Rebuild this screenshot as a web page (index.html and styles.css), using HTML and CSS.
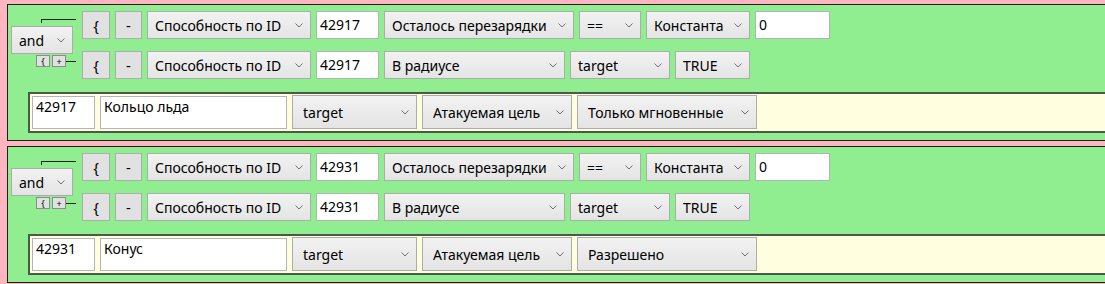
FILE: index.html
```html
<!doctype html>
<html>
<head>
<meta charset="utf-8">
<title>Правила</title>
<link rel="stylesheet" href="styles.css">
</head>
<body>
	<div class="rule">
		<div class="cond">
			<div class="logic">
				<div class="braceTop"></div>
				<select class="sel selAnd"><option>and</option></select>
				<div class="tools">
					<button class="mini">{</button><button class="mini">+</button><span class="braceBot"></span>
				</div>
			</div>
			<div class="rows">
				<div class="row">
					<button class="btn">{</button>
					<button class="btn">-</button>
					<select class="sel w164"><option>Способность по ID</option></select>
					<input type="text" class="box w63" value="42917">
					<select class="sel w190"><option>Осталось перезарядки</option></select>
					<select class="sel w62"><option>==</option></select>
					<select class="sel w104"><option>Константа</option></select>
					<input type="text" class="box w75" value="0">
				</div>
				<div class="row">
					<button class="btn">{</button>
					<button class="btn">-</button>
					<select class="sel w164"><option>Способность по ID</option></select>
					<input type="text" class="box w63" value="42917">
					<select class="sel w181"><option>В радиусе</option></select>
					<select class="sel w100"><option>target</option></select>
					<select class="sel w75"><option>TRUE</option></select>
				</div>
			</div>
		</div>
		<div class="action">
			<input type="text" class="box big w63" value="42917">
			<input type="text" class="box big w187" value="Кольцо льда">
			<select class="sel big w125"><option>target</option></select>
			<select class="sel big w150"><option>Атакуемая цель</option></select>
			<select class="sel big w180"><option>Только мгновенные</option></select>
		</div>
	</div>
	<div class="rule">
		<div class="cond">
			<div class="logic">
				<div class="braceTop"></div>
				<select class="sel selAnd"><option>and</option></select>
				<div class="tools">
					<button class="mini">{</button><button class="mini">+</button><span class="braceBot"></span>
				</div>
			</div>
			<div class="rows">
				<div class="row">
					<button class="btn">{</button>
					<button class="btn">-</button>
					<select class="sel w164"><option>Способность по ID</option></select>
					<input type="text" class="box w63" value="42931">
					<select class="sel w190"><option>Осталось перезарядки</option></select>
					<select class="sel w62"><option>==</option></select>
					<select class="sel w104"><option>Константа</option></select>
					<input type="text" class="box w75" value="0">
				</div>
				<div class="row">
					<button class="btn">{</button>
					<button class="btn">-</button>
					<select class="sel w164"><option>Способность по ID</option></select>
					<input type="text" class="box w63" value="42931">
					<select class="sel w181"><option>В радиусе</option></select>
					<select class="sel w100"><option>target</option></select>
					<select class="sel w75"><option>TRUE</option></select>
				</div>
			</div>
		</div>
		<div class="action">
			<input type="text" class="box big w63" value="42931">
			<input type="text" class="box big w187" value="Конус">
			<select class="sel big w125"><option>target</option></select>
			<select class="sel big w150"><option>Атакуемая цель</option></select>
			<select class="sel big w180"><option>Разрешено</option></select>
		</div>
	</div>
</body>
</html>
```

FILE: styles.css
```css
html,
body {
	overflow: hidden;
}
body {
	margin: 0;
	padding: 4px 0 0 7px;
	background: #ffb6c1;
	font: 14px "Noto Sans", "Open Sans", sans-serif;
	color: #000;
}
button,
input,
select {
	margin: 0;
	font: inherit;
	color: inherit;
	outline: none;
	box-sizing: border-box;
}
.rule {
	margin: 0 -30px 5px 0;
	padding: 6px 0 7px 3px;
	background: #90ee90;
	border: 1px solid #1e1e1e;
}
.cond {
	display: flex;
	height: 68px;
}
.logic {
	width: 65px;
	margin-right: 6px;
}
.braceTop {
	box-sizing: border-box;
	margin: 8px 0 0 30px;
	width: 35px;
	height: 4px;
	border-top: 1px solid #222;
	border-left: 1px solid #222;
}
.selAnd {
	display: block;
	margin-top: 3px;
	width: 62px;
	height: 27px;
}
.tools {
	display: flex;
	align-items: center;
	margin: 1px 0 0 25px;
	height: 12px;
}
.mini {
	width: 14px;
	height: 12px;
	padding: 0;
	margin-right: 2px;
	border: 1px solid #8c8c8c;
	background: #e1e1e1;
	font-size: 9px;
	line-height: 9px;
}
.mini:last-of-type {
	margin-right: 0;
}
.braceBot {
	width: 10px;
	border-top: 1px solid #222;
}
.rows {
	display: flex;
	flex-direction: column;
	gap: 12px;
}
.row {
	display: flex;
	gap: 5px;
	height: 28px;
}
.btn {
	width: 28px;
	height: 28px;
	padding: 0;
	border: 1px solid #adadad;
	background: #e1e1e1;
	font-size: 15px;
}
.btn + .btn {
	width: 27px;
}
.sel {
	appearance: none;
	-webkit-appearance: none;
	height: 28px;
	padding: 0 20px 0 7px;
	border: 1px solid #acacac;
	border-radius: 0;
	background: url("data:image/svg+xml,%3Csvg xmlns='http://www.w3.org/2000/svg' width='8' height='5'%3E%3Cpath d='M.5.5l3.5 3.5 3.5-3.5' fill='none' stroke='%23707070'/%3E%3C/svg%3E") no-repeat right 7px center / 8px 5px,
		linear-gradient(#f2f2f2, #e4e4e4);
}
.box {
	height: 28px;
	padding: 0 3px 2px;
	border: 1px solid #b4b4b4;
	background: #fff;
}
.action {
	display: flex;
	align-items: flex-end;
	gap: 5px;
	margin: 13px 0 0 17px;
	padding: 1px 2px 2px;
	background: #ffffe0;
	border: 2px solid #4b584b;
}
.sel.big {
	height: 34px;
	padding-left: 10px;
}
.box.big {
	height: 33px;
	padding: 0 3px 12px;
}
.w63 { width: 63px; }
.w62 { width: 62px; }
.w75 { width: 75px; }
.w100 { width: 100px; }
.w104 { width: 104px; }
.w125 { width: 125px; }
.w150 { width: 150px; }
.w164 { width: 164px; }
.w180 { width: 180px; }
.w181 { width: 181px; }
.w187 { width: 187px; }
.w190 { width: 190px; }
```
